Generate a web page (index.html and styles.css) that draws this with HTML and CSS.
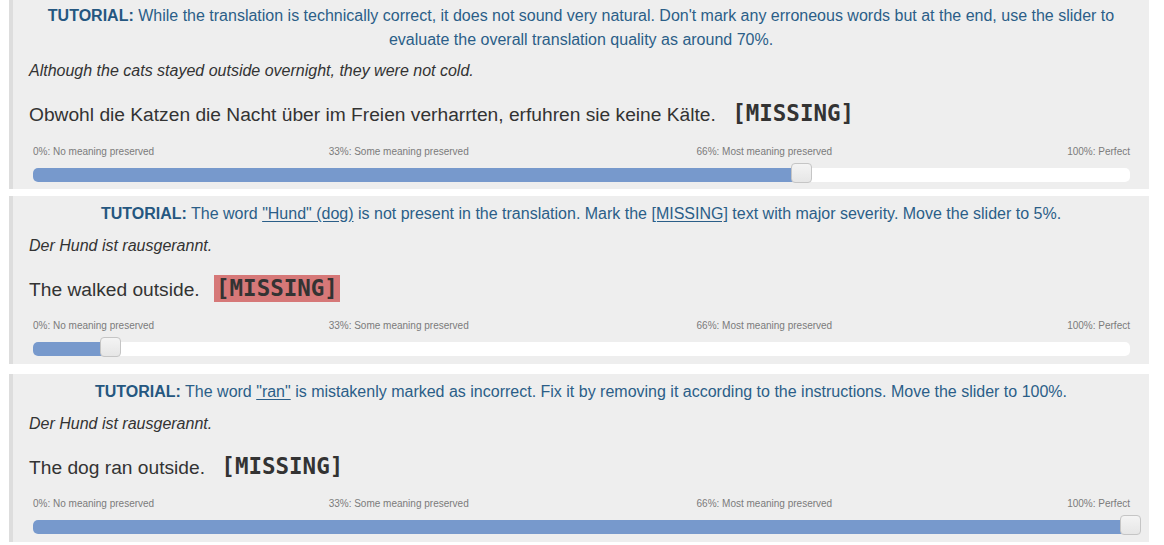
FILE: index.html
```html
<!DOCTYPE html>
<html lang="en">
<head>
<meta charset="utf-8">
<title>Tutorial</title>
<link rel="stylesheet" href="styles.css">
</head>
<body>
<main class="list">
  <section class="card card-first">
    <p class="tutorial"><strong>TUTORIAL:</strong> While the translation is technically correct, it does not sound very natural. Don't mark any erroneous words but at the end, use the slider to evaluate the overall translation quality as around 70%.</p>
    <p class="source">Although the cats stayed outside overnight, they were not cold.</p>
    <p class="target">Obwohl die Katzen die Nacht über im Freien verharrten, erfuhren sie keine Kälte. <span class="missing">[MISSING]</span></p>
    <div class="scale">
      <span class="lbl lbl-0">0%: No meaning preserved</span>
      <span class="lbl lbl-33">33%: Some meaning preserved</span>
      <span class="lbl lbl-66">66%: Most meaning preserved</span>
      <span class="lbl lbl-100">100%: Perfect</span>
    </div>
    <div class="slider">
      <div class="fill" style="width:70%"></div>
      <div class="handle" style="left:70%"></div>
    </div>
  </section>

  <section class="card">
    <p class="tutorial"><strong>TUTORIAL:</strong> The word <u>"Hund" (dog)</u> is not present in the translation. Mark the <u>[MISSING]</u> text with major severity. Move the slider to 5%.</p>
    <p class="source">Der Hund ist rausgerannt.</p>
    <p class="target">The walked outside. <span class="missing missing-marked">[MISSING]</span></p>
    <div class="scale">
      <span class="lbl lbl-0">0%: No meaning preserved</span>
      <span class="lbl lbl-33">33%: Some meaning preserved</span>
      <span class="lbl lbl-66">66%: Most meaning preserved</span>
      <span class="lbl lbl-100">100%: Perfect</span>
    </div>
    <div class="slider">
      <div class="fill" style="width:7%"></div>
      <div class="handle" style="left:7%"></div>
    </div>
  </section>

  <section class="card card-spaced">
    <p class="tutorial"><strong>TUTORIAL:</strong> The word <u>"ran"</u> is mistakenly marked as incorrect. Fix it by removing it according to the instructions. Move the slider to 100%.</p>
    <p class="source">Der Hund ist rausgerannt.</p>
    <p class="target">The dog ran outside. <span class="missing">[MISSING]</span></p>
    <div class="scale">
      <span class="lbl lbl-0">0%: No meaning preserved</span>
      <span class="lbl lbl-33">33%: Some meaning preserved</span>
      <span class="lbl lbl-66">66%: Most meaning preserved</span>
      <span class="lbl lbl-100">100%: Perfect</span>
    </div>
    <div class="slider">
      <div class="fill" style="width:100%"></div>
      <div class="handle" style="left:100%"></div>
    </div>
  </section>
</main>
</body>
</html>
```

FILE: styles.css
```css
html, body {
  margin: 0;
  padding: 0;
  background: #ffffff;
}

body {
  font-family: "Liberation Sans", Arial, sans-serif;
  color: #333333;
  overflow: hidden;
}

.list {
  display: flex;
  flex-direction: column;
  gap: 7px;
  padding: 0 15px 0 9px;
  margin-top: -2px;
}

.card {
  background: #eeeeee;
  border-left: 4px solid #dddddd;
  padding: 6px 16px 8px 16px;
}

.card-first {
  padding-bottom: 7px;
}

.card-first .source {
  margin-top: 7px;
}

.card-first .scale {
  margin-top: 17px;
}

.card-spaced {
  margin-top: 3px;
}

.tutorial {
  margin: 0;
  text-align: center;
  font-size: 16px;
  line-height: 24px;
  color: #2b5e88;
}

.tutorial strong {
  color: #255780;
}

.tutorial u {
  text-decoration: underline;
  text-underline-offset: 2px;
}

.source {
  margin: 8px 0 0 0;
  font-size: 16px;
  line-height: 24px;
  font-style: italic;
  color: #333333;
}

.target {
  margin: 17px 0 0 0;
  font-size: 19.2px;
  line-height: 27px;
  color: #333333;
}

.missing {
  display: inline-block;
  margin-left: 9px;
  padding: 0 2px;
  font-family: "DejaVu Sans Mono", "Liberation Mono", monospace;
  font-weight: bold;
  font-size: 22.5px;
  line-height: 27px;
  color: #333333;
}

.missing-marked {
  background: #d67878;
}

.scale {
  display: grid;
  grid-template-columns: repeat(6, 1fr);
  margin: 16px 3px 0 4px;
  font-size: 10px;
  line-height: 14px;
  color: #7b7b7b;
  white-space: nowrap;
}

.lbl-0 {
  grid-column: 1 / 2;
  justify-self: start;
}

.lbl-33 {
  grid-column: 2 / 4;
  justify-self: center;
}

.lbl-66 {
  grid-column: 4 / 6;
  justify-self: center;
}

.lbl-100 {
  grid-column: 6 / 7;
  justify-self: end;
}

.slider {
  position: relative;
  height: 14px;
  margin: 9px 3px 0 4px;
  background: #ffffff;
  border-radius: 5px;
}

.fill {
  height: 100%;
  background: #7799cc;
  border-radius: 5px 0 0 5px;
}

.handle {
  position: absolute;
  top: -5px;
  width: 19px;
  height: 18px;
  margin-left: -10px;
  border: 1px solid #c5c5c5;
  border-radius: 4px;
  background: linear-gradient(#f4f4f4, #e6e6e6);
}
```
